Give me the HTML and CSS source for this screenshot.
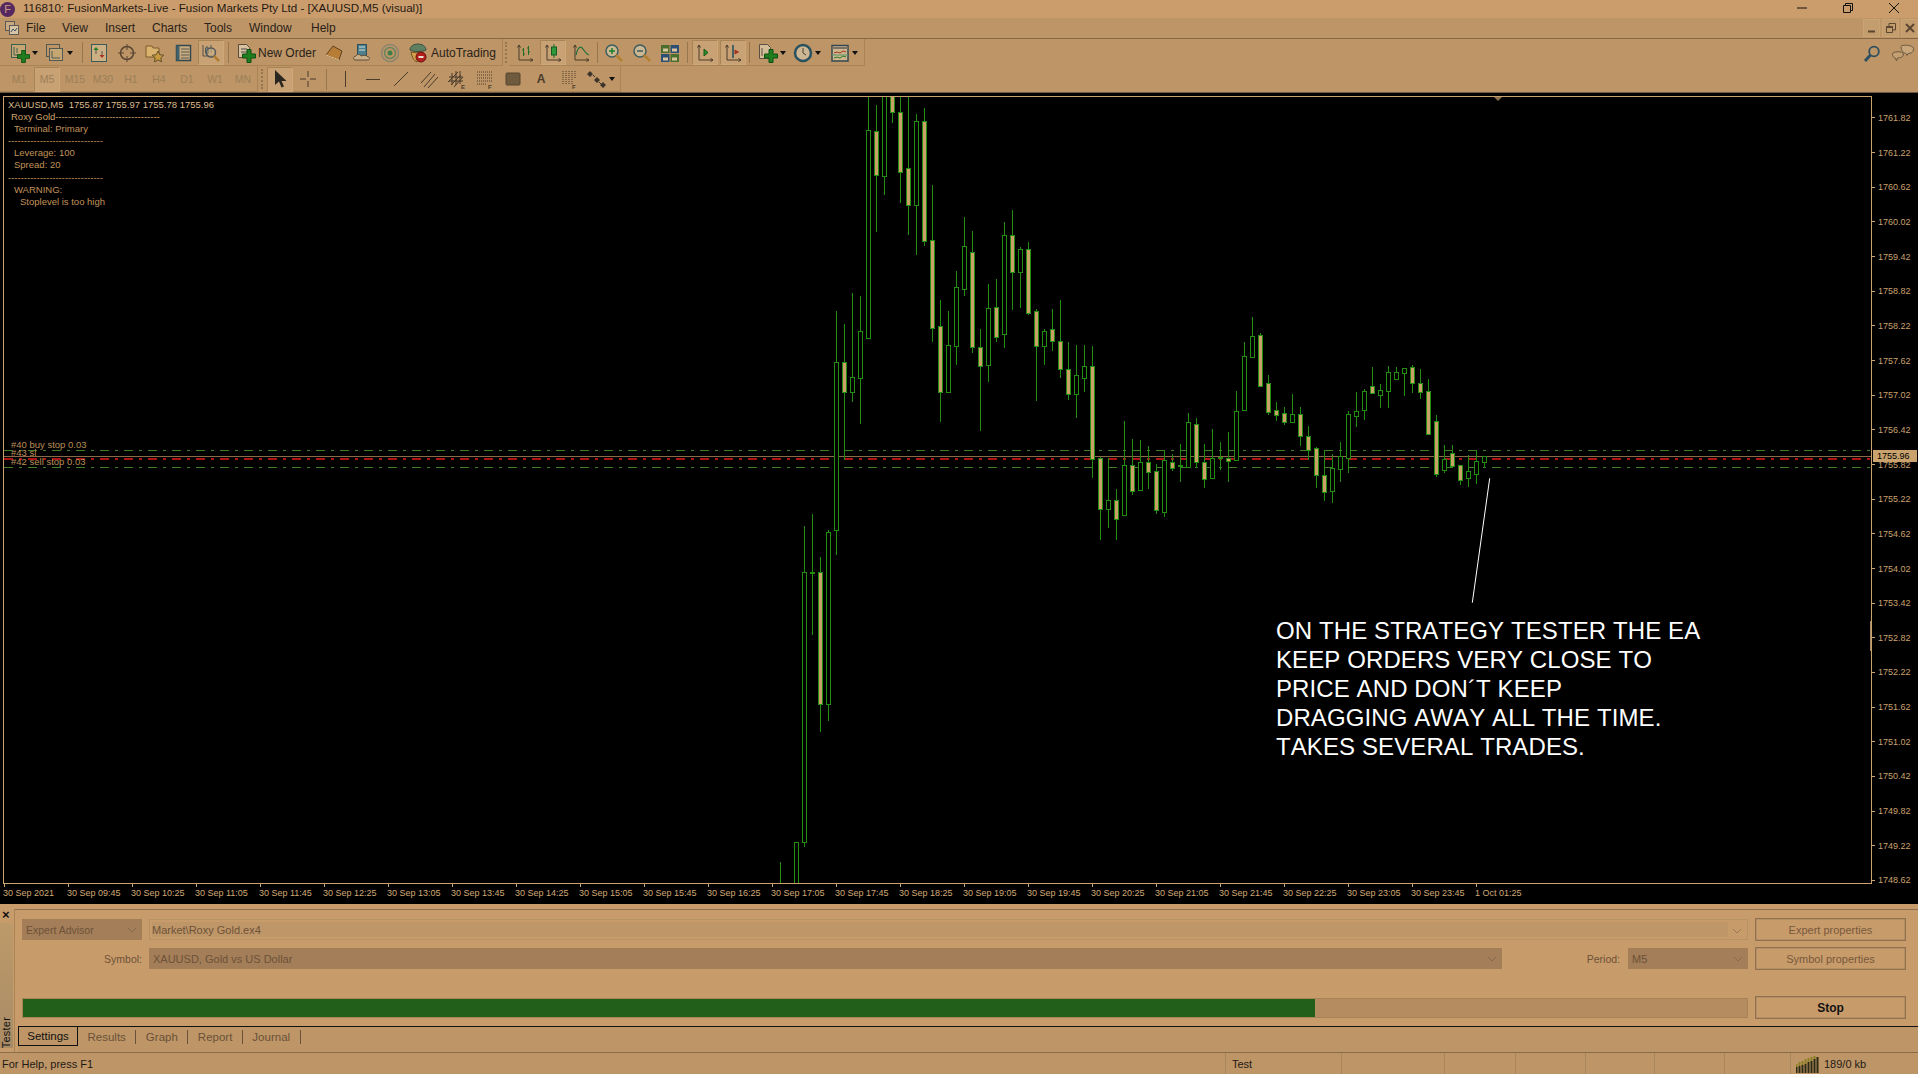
FILE: index.html
```html
<!DOCTYPE html>
<html lang="en">
<head>
<meta charset="utf-8">
<title>116810: FusionMarkets-Live</title>
<link rel="stylesheet" href="styles.css">
</head>
<body>
<svg class="defs" aria-hidden="true">
  <symbol id="plus" viewBox="0 0 14 14"><path d="M5 .5h4v4.500h4.500v4H9v4.500H5V9H.5V5H5z" fill="#1f7f1f" stroke="#0e4f14"/></symbol>
  <symbol id="axes" viewBox="0 0 20 20"><path d="M4 2v15h14M4 2L2.500 4.500M4 2l1.500 2.500M18 17l-2.500-1.500M18 17l-2.500 1.500" fill="none" stroke="#4a3b2a"/></symbol>
</svg>

<div class="app">
  <header class="titlebar">
    <span class="logo">F</span>
    <span class="title-text">116810: FusionMarkets-Live - Fusion Markets Pty Ltd - [XAUUSD,M5 (visual)]</span>
    <div class="winbtns">
      <svg class="winbtn" viewBox="0 0 12 12"><path d="M1 6h10" stroke="#111" fill="none"/></svg>
      <svg class="winbtn" viewBox="0 0 12 12"><path d="M1.500 3.500h7v7h-7zM3.500 3.500v-2h7v7h-2" stroke="#111" fill="none"/></svg>
      <svg class="winbtn" viewBox="0 0 12 12"><path d="M1 1l10 10M11 1L1 11" stroke="#111" fill="none"/></svg>
    </div>
  </header>

  <nav class="menubar">
    <svg class="menu-icon" viewBox="0 0 16 16"><rect x="1.500" y="1.500" width="9" height="9" fill="#c9a97f" stroke="#5b5a58"/><rect x="5.500" y="5.500" width="9" height="9" fill="#d8c3a3" stroke="#5b5a58"/><path d="M7 12l2-3 2 2 2-3" stroke="#35566b" fill="none"/></svg>
    <span class="menu-item m-file">File</span>
    <span class="menu-item m-view">View</span>
    <span class="menu-item m-insert">Insert</span>
    <span class="menu-item m-charts">Charts</span>
    <span class="menu-item m-tools">Tools</span>
    <span class="menu-item m-window">Window</span>
    <span class="menu-item">Help</span>
    <div class="mdi">
      <span class="mdi-btn"><svg viewBox="0 0 12 12"><path d="M2 9.500h7" stroke="#5c4630" stroke-width="2"/></svg></span>
      <span class="mdi-btn"><svg viewBox="0 0 12 12"><path d="M1.500 4.500h6v6h-6zM4 4V1.500h6.500V8H8" stroke="#5c4630" fill="none"/><path d="M1.500 5h6" stroke="#5c4630" stroke-width="2"/></svg></span>
      <span class="mdi-btn"><svg viewBox="0 0 12 12"><path d="M2 2l8 8M10 2l-8 8" stroke="#5c4630" stroke-width="2"/></svg></span>
    </div>
  </nav>

  <div class="toolbar tb-one">
    <div class="tgroup g-main">
      <span class="btn split"><svg class="ic" viewBox="0 0 20 20"><rect x="1.500" y="1.500" width="14" height="13" fill="#c6a774" stroke="#3f5e52"/><path d="M4 4v8h8M7 5v5" stroke="#3f5e52" fill="none"/><use href="#plus" x="7" y="7" width="13" height="13"/></svg><i class="dd"></i></span>
      <span class="btn split"><svg class="ic" viewBox="0 0 20 20"><rect x="1.500" y="1.500" width="13" height="12" fill="none" stroke="#4f5a54"/><rect x="4.500" y="5.500" width="13" height="12" fill="#c6a774" stroke="#4f5a54"/><path d="M7 8v7h8" stroke="#4f5a54" fill="none"/></svg><i class="dd"></i></span>
      <i class="sep s-a"></i>
      <span class="btn"><svg class="ic" viewBox="0 0 20 20"><rect x="2.500" y="1.500" width="15" height="17" fill="#ccb083" stroke="#3d5a5a"/><path d="M7 4l-2.500 3h5z" fill="#1f7f1f"/><path d="M13 15l-2.500-3h5z" fill="#a63224"/><path d="M7 7v4M13 8v4" stroke="#555"/></svg></span>
      <span class="btn"><svg class="ic" viewBox="0 0 20 20"><circle cx="10" cy="10" r="6.500" fill="none" stroke="#5a4632" stroke-width="1.500"/><path d="M10 1v6M10 13v6M1 10h6M13 10h6" stroke="#5a4632"/></svg></span>
      <span class="btn"><svg class="ic" viewBox="0 0 20 20"><path d="M1 3h6l1 2h6v9H1z" fill="#d9b26d" stroke="#7b5a2e"/><path d="M13 8l1.800 3.700 4 .5-3 2.700.8 4-3.600-2-3.600 2 .8-4-3-2.700 4-.5z" fill="#c79a3e" stroke="#62502a"/></svg></span>
      <span class="btn"><svg class="ic" viewBox="0 0 20 20"><rect x="3.500" y="2.500" width="14" height="15" fill="#c8ab7f" stroke="#31484f" stroke-width="1.500"/><path d="M3.500 2.500h3v15h-3z" fill="#41606a"/><path d="M8 6h8M8 9h8M8 12h8M8 15h8" stroke="#5a5a50"/></svg></span>
      <span class="btn boxed"><svg class="ic" viewBox="0 0 20 20"><path d="M2 2v11h9" stroke="#59524a" fill="none"/><path d="M6 3v9M10 2v8" stroke="#4c5c55"/><rect x="4.500" y="5" width="3" height="5" fill="#a8a08c" stroke="#4c5c55"/><circle cx="10" cy="9.500" r="4.500" fill="#cbb38b" fill-opacity=".6" stroke="#52585a" stroke-width="1.500"/><path d="M13 13l5 5" stroke="#b07d30" stroke-width="2.500"/></svg></span>
      <i class="sep"></i>
      <span class="btn wide-order"><svg class="ic" viewBox="0 0 20 20"><path d="M2.500 1.500h8l3 3v10h-11z" fill="#d8c29f" stroke="#5a4a3a"/><path d="M5 6h6M5 9h6" stroke="#4c4c4c"/><use href="#plus" x="6" y="6" width="14" height="14"/></svg><span class="btn-label">New Order</span></span>
      <span class="btn"><svg class="ic" viewBox="0 0 20 20"><path d="M2 12l7-9 9 5-3 9z" fill="#b77d36" stroke="#5f4120"/><path d="M2 12l13 5" stroke="#e3c58f"/></svg></span>
      <span class="btn"><svg class="ic" viewBox="0 0 20 20"><rect x="5.500" y="1.500" width="9" height="11" fill="#4e7f8a" stroke="#2e4f59"/><path d="M7 4h6M7 7h6" stroke="#cfe0dc"/><path d="M3 17c-2 0-2-4 1-4 1-2 4-2 5 0 2-1 6-1 7 1 2 0 2 3 0 3z" fill="#c9ae86" stroke="#62503a"/></svg></span>
      <span class="btn"><svg class="ic" viewBox="0 0 20 20"><circle cx="10" cy="10" r="8.500" fill="none" stroke="#8c8570" stroke-width="1.500"/><circle cx="10" cy="10" r="5.500" fill="none" stroke="#6a8460" stroke-width="1.500"/><circle cx="10" cy="10" r="2.500" fill="#3d7f4a"/></svg></span>
      <span class="btn wide-auto"><svg class="ic" viewBox="0 0 20 20"><path d="M2 7c0-4 4-6 8-6s8 2 8 6c-3 2-13 2-16 0z" fill="#5e7f60" stroke="#3e4f3e"/><path d="M3 9c1 5 3 9 6 10l2-9z" fill="#d4a24c" stroke="#70501f"/><circle cx="13" cy="14" r="5" fill="#b21e1a" stroke="#6b1210"/><rect x="10.500" y="13" width="5" height="2" fill="#e7e0d0"/></svg><span class="btn-label">AutoTrading</span></span>
    </div>
    <i class="grip"></i>
    <div class="tgroup g-chart">
      <span class="btn"><svg class="ic" viewBox="0 0 20 20"><use href="#axes" width="20" height="20"/><path d="M8.500 5v8M7 7h1.500M8.500 11H10M13.500 3v9M12 5h1.500M13.500 9H15" stroke="#1f6f2a" fill="none"/></svg></span>
      <span class="btn boxed"><svg class="ic" viewBox="0 0 20 20"><use href="#axes" width="20" height="20"/><path d="M11 1v14" stroke="#1f6f2a"/><rect x="8.500" y="4" width="5" height="8" fill="#2f9a3c" stroke="#155a22"/></svg></span>
      <span class="btn"><svg class="ic" viewBox="0 0 20 20"><use href="#axes" width="20" height="20"/><path d="M5 12c2-9 5-9 7-6s3 5 6 6" fill="none" stroke="#1f6f3a" stroke-width="1.200"/></svg></span>
      <i class="sep s-n"></i>
      <span class="btn"><svg class="ic" viewBox="0 0 20 20"><circle cx="8" cy="8" r="6" fill="#d2c6a4" fill-opacity=".7" stroke="#3e5d5f" stroke-width="1.500"/><path d="M5 8h6M8 5v6" stroke="#1c7f2c" stroke-width="1.500"/><path d="M12 12l6 6" stroke="#b3802f" stroke-width="2.500"/></svg></span>
      <span class="btn"><svg class="ic" viewBox="0 0 20 20"><circle cx="8" cy="8" r="6" fill="#d2c6a4" fill-opacity=".7" stroke="#3e5d5f" stroke-width="1.500"/><path d="M5 8h6" stroke="#3e5d5f" stroke-width="1.500"/><path d="M12 12l6 6" stroke="#b3802f" stroke-width="2.500"/></svg></span>
      <span class="btn"><svg class="ic" viewBox="0 0 20 20"><path d="M1 2h8.500v8H1z" fill="#4a6f2c"/><path d="M10.500 2H19v8h-8.500z" fill="#2a4f73"/><path d="M1 11h8.500v8H1z" fill="#2a4f73"/><path d="M10.500 11H19v8h-8.500z" fill="#4a6f2c"/><path d="M3 5.500h5v3H3zM12 5.500h5v3h-5zM3 14.500h5v3H3zM12 14.500h5v3h-5z" fill="#d9c39c"/></svg></span>
      <i class="sep"></i>
      <span class="btn boxed"><svg class="ic" viewBox="0 0 20 20"><use href="#axes" width="20" height="20"/><path d="M9 6v7l4-3.500z" fill="#2a8a2a" stroke="#165a1a"/></svg></span>
      <span class="btn boxed"><svg class="ic" viewBox="0 0 20 20"><use href="#axes" width="20" height="20"/><path d="M10 2v13" stroke="#1e4f60" stroke-width="1.500"/><path d="M16 9h-3M15 9l-3-2v4z" fill="#a63220" stroke="#a63220"/></svg></span>
      <i class="sep s-n"></i>
      <span class="btn split s-first"><svg class="ic" viewBox="0 0 20 20"><path d="M1.500 1.500h8l3 3v11h-11z" fill="#d3bd98" stroke="#5c5045"/><path d="M4 5v8" stroke="#5c5045"/><use href="#plus" x="6" y="6" width="14" height="14"/></svg><i class="dd"></i></span>
      <span class="btn split"><svg class="ic" viewBox="0 0 20 20"><circle cx="10" cy="10" r="8" fill="#cdb694" stroke="#28525f" stroke-width="2.500"/><path d="M10 5v5l3 2" stroke="#46443c" fill="none"/></svg><i class="dd"></i></span>
      <span class="btn split s-first"><svg class="ic" viewBox="0 0 20 20"><rect x="2" y="2.500" width="16" height="15.500" fill="#cfb58e" stroke="#35484f" stroke-width="1.500"/><path d="M2 5h16" stroke="#7c7366" stroke-width="2"/><path d="M4 10l3-1 3 1 3-2 3 1" fill="none" stroke="#a13422"/><path d="M2 12h16" stroke="#596"/><path d="M4 15l3-1 3 1 3-2 3 1" fill="none" stroke="#2a7a2a"/></svg><i class="dd"></i></span>
    </div>
    <div class="tb-right">
      <svg class="ic" viewBox="0 0 20 20"><circle cx="12" cy="7.500" r="4.800" fill="none" stroke="#2f4f60" stroke-width="1.800"/><path d="M8.500 11L3 17" stroke="#2f4f60" stroke-width="3"/></svg>
      <svg class="ic chat" viewBox="0 0 24 20"><path d="M10 2.500c0-2 12-2 12.500 2 .5 4-3 5-5.500 5l-1 2-1-2c-2 0-5-3-5-7z" fill="#c9a67a" stroke="#6d5a44"/><path d="M1.500 10c0-3 11-3 11 0 0 3-3 4-6 4l-1 3-1-3c-2 0-3-2-3-4z" fill="#c49f72" stroke="#6d5a44"/></svg>
    </div>
  </div>

  <div class="toolbar tb-two">
    <div class="tgroup g-tf">
      <span class="tf">M1</span><span class="tf boxed">M5</span><span class="tf">M15</span><span class="tf">M30</span><span class="tf">H1</span><span class="tf">H4</span><span class="tf">D1</span><span class="tf">W1</span><span class="tf">MN</span>
    </div>
    <i class="grip"></i>
    <div class="tgroup g-draw">
      <span class="btn boxed"><svg class="ic" viewBox="0 0 20 20"><path d="M5 1v15l4-3.500 2.500 6 2.500-1-2.500-5.500h5z" fill="#2c2620"/></svg></span>
      <span class="btn"><svg class="ic" viewBox="0 0 20 20"><path d="M10 2v6M10 12v6M2 10h6M12 10h6" stroke="#4a3b2a"/></svg></span>
      <i class="sep s-d"></i>
      <span class="btn"><svg class="ic" viewBox="0 0 20 20"><path d="M10.500 2v16" stroke="#4a3b2a"/></svg></span>
      <span class="btn"><svg class="ic" viewBox="0 0 20 20"><path d="M3 10.500h14" stroke="#4a3b2a"/></svg></span>
      <span class="btn"><svg class="ic" viewBox="0 0 20 20"><path d="M3 17L17 3" stroke="#4a3b2a"/></svg></span>
      <span class="btn"><svg class="ic" viewBox="0 0 20 20"><path d="M2 14L12 3M5 18L16 5M9 19L19 8" stroke="#4a3b2a"/></svg></span>
      <span class="btn"><svg class="ic" viewBox="0 0 20 20"><path d="M1 13L11 3M4 16L14 6M7 18L16 8M5 4v12M9 2v14M13 2v13M2 8h14M2 12h14" stroke="#4a3b2a" fill="none"/><text class="ic-letter" x="14" y="20">E</text></svg></span>
      <span class="btn"><svg class="ic" viewBox="0 0 20 20"><path d="M2 3h15M2 6h15M2 9h15M2 12h15M2 15h10" stroke="#4a3b2a" stroke-dasharray="1 1" fill="none"/><text class="ic-letter" x="13" y="20">F</text></svg></span>
      <span class="btn"><svg class="ic" viewBox="0 0 20 20"><rect x="3" y="4" width="14" height="12" rx="1" fill="#6f5a3e" stroke="#57462f"/></svg></span>
      <span class="btn tool-a">A</span>
      <span class="btn"><svg class="ic" viewBox="0 0 20 20"><path d="M4 2v14M7 2v14M10 2v14M13 2v14M16 2v8" stroke="#4a3b2a" stroke-dasharray="1 1" fill="none"/><text class="ic-letter" x="13" y="20">F</text></svg></span>
      <span class="btn split s-arrows"><svg class="ic" viewBox="0 0 20 20"><path d="M3 2l3 3-3 3-3-3zM10 8l3 3-3 3-3-3zM16 13l3 3-3 3-3-3z" fill="#3c342a"/><path d="M6 6l2 2M12 13l2 2" stroke="#3c342a"/></svg><i class="dd"></i></span>
    </div>
  </div>

  <main class="chart-panel">
    <div class="chart-row">
      <div class="plot">
        <svg id="candles" class="candles" viewBox="4 97 1867 786">
          <path class="ln-green" d="M4 450.500H1871M4 467.500H1871"/>
          <path class="ln-price" d="M4 456.500H1871"/>
          <path class="ln-red" d="M4 459H1871"/>
          <path class="ln-note" d="M1489.700 478.300L1472.300 602.700"/>
        </svg>
        <div class="info">
          <div class="info-head">XAUUSD,M5  1755.87 1755.97 1755.78 1755.96</div>
          <div class="ind-1">Roxy Gold---------------------------------</div>
          <div class="ind-2">Terminal: Primary</div>
          <div>------------------------------</div>
          <div class="ind-2">Leverage: 100</div>
          <div class="ind-2">Spread: 20</div>
          <div>------------------------------</div>
          <div class="ind-2">WARNING:</div>
          <div class="ind-3">Stoplevel is too high</div>
        </div>
        <div class="order o-40">#40 buy stop 0.03</div>
        <div class="order o-43">#43 sl</div>
        <div class="order o-42">#42 sell stop 0.03</div>
        <i class="shift-mark"></i>
        <i class="scroll-mark"></i>
        <div class="note">ON THE STRATEGY TESTER THE EA<br>KEEP ORDERS VERY CLOSE TO<br>PRICE AND DON´T KEEP<br>DRAGGING AWAY ALL THE TIME.<br>TAKES SEVERAL TRADES.</div>
      </div>
      <div class="price-axis">
        <span class="p">1761.82</span><span class="p">1761.22</span><span class="p">1760.62</span><span class="p">1760.02</span><span class="p">1759.42</span><span class="p">1758.82</span><span class="p">1758.22</span><span class="p">1757.62</span><span class="p">1757.02</span><span class="p">1756.42</span><span class="p">1755.82</span><span class="p">1755.22</span><span class="p">1754.62</span><span class="p">1754.02</span><span class="p">1753.42</span><span class="p">1752.82</span><span class="p">1752.22</span><span class="p">1751.62</span><span class="p">1751.02</span><span class="p">1750.42</span><span class="p">1749.82</span><span class="p">1749.22</span><span class="p">1748.62</span>
        <span class="price-tag">1755.96</span>
      </div>
    </div>
    <div class="time-axis">
      <span class="t">30 Sep 2021</span><span class="t">30 Sep 09:45</span><span class="t">30 Sep 10:25</span><span class="t">30 Sep 11:05</span><span class="t">30 Sep 11:45</span><span class="t">30 Sep 12:25</span><span class="t">30 Sep 13:05</span><span class="t">30 Sep 13:45</span><span class="t">30 Sep 14:25</span><span class="t">30 Sep 15:05</span><span class="t">30 Sep 15:45</span><span class="t">30 Sep 16:25</span><span class="t">30 Sep 17:05</span><span class="t">30 Sep 17:45</span><span class="t">30 Sep 18:25</span><span class="t">30 Sep 19:05</span><span class="t">30 Sep 19:45</span><span class="t">30 Sep 20:25</span><span class="t">30 Sep 21:05</span><span class="t">30 Sep 21:45</span><span class="t">30 Sep 22:25</span><span class="t">30 Sep 23:05</span><span class="t">30 Sep 23:45</span><span class="t">1 Oct 01:25</span>
    </div>
  </main>

  <section class="tester">
    <aside class="side">
      <span class="side-x">×</span>
      <span class="side-bar"><span class="side-label">Tester</span></span>
    </aside>
    <div class="tester-main">
      <div class="form-row r1">
        <span class="select dark w-ea">Expert Advisor<svg class="chev" viewBox="0 0 10 6"><path d="M1 1l4 4 4-4" fill="none" stroke="#86684a"/></svg></span>
        <span class="select light grow"><span class="light-inner">Market\Roxy Gold.ex4</span><svg class="chev" viewBox="0 0 10 6"><path d="M1 1l4 4 4-4" fill="none" stroke="#9a7a56"/></svg></span>
        <span class="tbtn">Expert properties</span>
      </div>
      <div class="form-row r2">
        <span class="lbl w-ea">Symbol:</span>
        <span class="select dark grow">XAUUSD, Gold vs US Dollar<svg class="chev" viewBox="0 0 10 6"><path d="M1 1l4 4 4-4" fill="none" stroke="#86684a"/></svg></span>
        <span class="lbl w-period">Period:</span>
        <span class="select dark w-ea">M5<svg class="chev" viewBox="0 0 10 6"><path d="M1 1l4 4 4-4" fill="none" stroke="#86684a"/></svg></span>
        <span class="tbtn">Symbol properties</span>
      </div>
      <div class="form-row r3">
        <div class="progress"><div class="progress-fill"></div></div>
        <span class="tbtn stop">Stop</span>
      </div>
      <div class="tabs">
        <span class="tab active">Settings</span>
        <span class="tab">Results</span>
        <span class="tab">Graph</span>
        <span class="tab">Report</span>
        <span class="tab">Journal</span>
      </div>
    </div>
  </section>

  <footer class="status">
    <span class="st st-help">For Help, press F1</span>
    <span class="st st-test">Test</span>
    <span class="st st-b"></span>
    <span class="st st-c"></span>
    <span class="st st-c"></span>
    <span class="st st-d"></span>
    <span class="st st-c"></span>
    <span class="st st-e"></span>
    <span class="st st-conn"><svg class="bars" viewBox="0 0 24 18"><path d="M.5 18v-6M3.500 18v-7M6.500 18v-8M9.500 18v-9M12.500 18V7M15.500 18V6M18.500 18V4M21.500 18V2" stroke="#2c2a14" stroke-width="2"/><path d="M.5 9v3M3.500 7v4M6.500 6v4M9.500 4v5M12.500 3v4M15.500 2v4M18.500 1v3" stroke="#8a7f24" stroke-width="2"/></svg>189/0 kb</span>
  </footer>
  <div class="bottom-edge"><i class="be-a"></i><i class="be-b"></i><i class="be-c"></i></div>
</div>
<script src="chart.js"></script>
</body>
</html>
```

FILE: styles.css
```css
* { box-sizing: border-box; }
html, body { margin: 0; padding: 0; background: #fff; overflow: hidden; }
body { font-family: "Liberation Sans", Arial, sans-serif; color: #2a2118; }
i { display: block; font-style: normal; }
.defs { width: 0; height: 0; position: absolute; }

.app { width: 1918px; height: 1074px; display: flex; flex-direction: column; background: #c89b6b; }

/* title */
.titlebar { height: 18px; background: #cc9d6c; display: flex; align-items: center; padding-bottom: 3px; font-size: 11.600px; flex: none; }
.logo { width: 15px; height: 15px; margin-top: 3px; border-radius: 50%; background: #55285f; color: #c89b80; font-size: 11px; line-height: 15px; text-align: center; flex: none; }
.title-text { margin-left: 8px; color: #1f1a14; white-space: nowrap; }
.winbtns { margin-left: auto; display: flex; gap: 34px; padding-right: 18px; }
.winbtn { width: 12px; height: 12px; }

/* menu */
.menubar { height: 21px; background: #bd9567; border-bottom: 1px solid #856845; display: flex; align-items: center; font-size: 12px; flex: none; position: relative; }
.menu-icon { width: 16px; height: 16px; margin: 0 6px 0 4px; flex: none; }
.menu-item { color: #2a2118; }
.m-file { width: 36px; }
.m-view { width: 43px; }
.m-insert { width: 47px; }
.m-charts { width: 52px; }
.m-tools { width: 45px; }
.m-window { width: 62px; }
.mdi { margin-left: auto; display: flex; gap: 2px; height: 18px; }
.mdi-btn { width: 17px; height: 18px; border: 1px solid #c9a372; display: flex; align-items: center; justify-content: center; background: #c49d6f; }
.mdi-btn svg { width: 12px; height: 12px; }

/* toolbars */
.toolbar { display: flex; background: #bd9567; flex: none; }
.tb-one { height: 27px; }
.tb-two { height: 27px; border-bottom: 1px solid #6e5a44; }
.tgroup { display: flex; align-items: center; height: 100%; padding-top: 1px; border-right: 1px solid #a98556; border-bottom: 1px solid #a98556; }
.g-main { width: 503px; padding-left: 6px; }
.g-chart { width: 356px; padding-left: 2px; }
.g-tf { width: 258px; padding-left: 5px; }
.g-draw { width: 355px; padding-left: 0; }
.grip { width: 3px; margin: 3px 2px 3px 3px; border-left: 2px dotted #96764e; }
.tb-one .grip { margin-right: 1px; margin-left: 2px; }
.btn { width: 28px; height: 25px; display: flex; align-items: center; justify-content: center; flex: none; }
.ic { width: 20px; height: 20px; flex: none; }
.boxed { border: 1px solid #a98556; border-right-color: #cfa878; border-bottom-color: #cfa878; background: #c8a174; width: 26px; margin: 0 1px; }
.split { width: 35px; justify-content: flex-start; padding-left: 4px; }
.s-first { margin-left: 2px; }
.s-arrows { width: 37px; padding-left: 4px; }
.dd { width: 0; height: 0; border: 3px solid transparent; border-top: 4px solid #111; border-bottom: 0; margin-left: 2px; }
.sep { width: 1px; height: 21px; background: #96764e; margin: 0 3px; flex: none; }
.s-a { margin: 0 2px 0 6px; }
.s-n { margin: 0 2px; }
.s-d { margin: 0 4px; }
.wide-order { width: 88px; justify-content: flex-start; padding-left: 4px; }
.wide-auto { width: 97px; justify-content: flex-start; padding-left: 4px; }
.btn-label { font-size: 12px; margin-left: 2px; color: #2a2118; }
.wide-auto .btn-label { margin-left: 3px; }
.tb-right { margin-left: auto; display: flex; gap: 9px; padding-right: 3px; padding-top: 3px; align-items: center; height: 26px; }
.chat { width: 24px; }
.tf { width: 28px; height: 25px; font-size: 10.500px; color: #9c7f58; display: flex; align-items: center; justify-content: center; flex: none; }
.tf.boxed { width: 26px; }
.tool-a { font-size: 12px; font-weight: bold; color: #4a3b2a; }
.ic-letter { font: bold 6px "Liberation Sans", sans-serif; fill: #4a3b2a; }

/* chart */
.chart-panel { height: 811px; flex: none; background: #000; padding-top: 3px; display: flex; flex-direction: column; }
.chart-row { display: flex; height: 788px; flex: none; padding-left: 3px; }
.plot { width: 1869px; height: 788px; border: 1px solid #c9a26e; position: relative; overflow: hidden; flex: none; }
.candles { position: absolute; left: 0; top: 0; width: 1867px; height: 786px; display: block; }
.ln-green, .ln-red { fill: none; stroke-dasharray: 9 6 3 6; }
.ln-green { stroke: #3f7f25; stroke-width: 1; }
.ln-red { stroke: #ae1212; stroke-width: 2; }
.ln-price { fill: none; stroke: #8a6a4a; stroke-width: 1; }
.ln-note { fill: none; stroke: #fff; stroke-width: 1; }
.wick { stroke: #238d12; stroke-width: 1; shape-rendering: crispEdges; }
.body-h { fill: #000; stroke: #238d12; stroke-width: 1; shape-rendering: crispEdges; }
.body-f { fill: #c9a066; stroke: #238d12; stroke-width: 1; shape-rendering: crispEdges; }

.info { position: absolute; left: 4px; top: 2px; font-size: 9.500px; line-height: 12.100px; color: #c2935a; white-space: nowrap; }
.info-head { color: #dcbb8c; white-space: pre; }
.ind-1 { padding-left: 3px; color: #cfa36c; }
.ind-2 { padding-left: 6px; }
.ind-3 { padding-left: 12px; }
.order { position: absolute; left: 7px; font-size: 9.500px; line-height: 10px; color: #bb8f5b; white-space: nowrap; }
.o-40 { top: 343px; }
.o-43 { top: 351px; }
.o-42 { top: 360px; }
.shift-mark { position: absolute; left: 1490px; top: 0; width: 0; height: 0; border: 4px solid transparent; border-top: 4px solid #8a7050; border-bottom: 0; }
.scroll-mark { position: absolute; right: -1px; top: 524px; width: 2px; height: 30px; background: #a58a64; }
.note { position: absolute; left: 1272px; top: 519px; font-size: 24px; line-height: 29.100px; font-kerning: none; letter-spacing: .1px; color: #fff; white-space: nowrap; }

.price-axis { flex: 1; padding-top: 4.670px; position: relative; color: #c9a26e; font-size: 9px; }
.p { display: flex; align-items: center; height: 34.670px; white-space: nowrap; }
.p::before { content: ""; width: 3px; height: 1px; background: #c9a26e; margin-right: 3px; }
.price-tag { position: absolute; left: 1px; top: 354px; width: 44px; height: 12px; line-height: 12px; background: #c9a26e; color: #000; padding-left: 4px; }

.time-axis { display: flex; height: 20px; flex: none; padding-left: 3px; color: #d0a974; font-size: 9px; }
.t { width: 64px; flex: none; height: 100%; padding-top: 4px; line-height: 10px; position: relative; white-space: nowrap; }
.t::before { content: ""; position: absolute; left: 1px; top: 0; width: 1px; height: 3px; background: #c9a26e; }

/* tester */
.tester { height: 148px; flex: none; display: flex; padding-top: 5px; background: #c89b6b; }
.side { width: 14px; flex: none; display: flex; flex-direction: column; }
.side-x { height: 14px; flex: none; font-size: 13px; font-weight: bold; line-height: 12px; padding-left: 2px; color: #111; }
.side-bar { flex: 1; background: linear-gradient(#bd9a69, #a98b66); display: flex; align-items: flex-end; width: 13px; margin-bottom: 4px; }
.side-label { writing-mode: vertical-rl; transform: rotate(180deg); font-size: 11px; line-height: 13px; color: #111; letter-spacing: .2px; }
.tester-main { flex: 1; border-top: 1px solid #8e7050; border-left: 1px solid #a98556; display: flex; flex-direction: column; padding-top: 8px; min-width: 0; }
.form-row { display: flex; align-items: center; padding: 0 12px 0 7px; flex: none; height: 23px; }
.r2 { margin-top: 6px; }
.r3 { margin-top: 26px; }
.select { height: 21px; display: flex; align-items: center; font-size: 11px; padding: 0 4px; white-space: nowrap; position: relative; flex: none; }
.select.dark { background: #a37e59; color: #6d5238; }
.select.light { background: #c89b6b; border: 1px solid #b79263; padding: 2px; color: #6d5238; }
.light-inner { background: #be9668; flex: 1; height: 100%; display: flex; align-items: center; padding-left: 0; margin-right: 17px; }
.w-ea { width: 120px; }
.grow { flex: 1; min-width: 0; }
.r1 .grow, .r2 .grow { margin: 0 7px; }
.r1 .select.dark { font-size: 10.500px; }
.chev { position: absolute; right: 5px; top: 8px; width: 10px; height: 6px; }
.lbl { font-size: 10.500px; color: #6d5238; text-align: right; flex: none; }
.r2 .grow { margin-right: 0; }
.w-period { width: 126px; padding-right: 8px; }
.r2 .select.w-ea { margin-right: 7px; }
.tbtn { width: 151px; height: 23px; border: 1px solid #8f7152; box-shadow: inset 0 0 0 .5px #a48259; display: flex; align-items: center; justify-content: center; font-size: 11px; color: #77593c; flex: none; }
.stop { font-weight: bold; font-size: 12px; color: #111; }
.progress { flex: 1; height: 20px; background: #b58c60; border: 1px solid #a68256; margin-right: 7px; }
.progress-fill { width: 1292px; height: 100%; background: #225f1a; }
.tabs { flex: 1; margin-top: 7px; margin-left: 3px; background: #bd9567; border-top: 1px solid #111; display: flex; align-items: flex-start; height: 22px; }
.tab { font-size: 11.500px; color: #6a5138; height: 14px; margin-top: 3px; line-height: 14px; padding: 0 9.500px; border-right: 1px solid #6a5138; white-space: nowrap; }
.tab.active { color: #111; height: 19px; line-height: 18px; margin-top: 0; border: 1px solid #111; border-top: 0; padding: 0; width: 60px; text-align: center; }

/* status */
.status { height: 22px; flex: none; background: #bd9567; border-top: 1px solid #8a6c49; display: flex; align-items: stretch; font-size: 11px; color: #1f1a14; }
.st { display: flex; align-items: center; border-right: 1px solid #a8855a; flex: none; padding-left: 6px; white-space: nowrap; }
.st-help { width: 1226px; padding-left: 2px; }
.st-test { width: 116px; }
.st-b { width: 103px; }
.st-c { width: 70.500px; }
.st-d { width: 68.500px; }
.st-e { width: 66px; }
.st-conn { flex: 1; border-right: 0; padding-left: 5px; }
.bars { width: 24px; height: 18px; margin-right: 4px; }
.bottom-edge { height: 1px; flex: none; display: flex; }
.be-a { width: 47px; background: #111; }
.be-b { width: 344px; background: #a88558; }
.be-c { flex: 1; background: #111; }
```

FILE: chart.js
```js
// [centre x, wick top, wick bottom, body top, body bottom, filled]
var CANDLES = [
[780,862,883,883,883,0],[796,842,883,842,890,0],[804,526,847,572,842,0],[812,514,635,572,573,0],
[820,557,732,572,704,1],[828,530,721,532,704,0],[836,311,555,362,530,0],[844,324,460,362,392,1],
[852,293,402,377,392,0],[860,296,424,331,378,0],[868,90,338,130,338,0],[876,105,232,131,175,1],
[884,90,195,90,176,0],[892,90,123,90,112,1],[900,90,203,112,172,1],[908,90,235,168,205,1],
[916,114,255,121,205,0],[924,108,246,121,241,1],[932,185,342,240,328,1],[940,300,422,326,392,1],
[948,311,392,345,392,0],[956,271,365,287,346,0],[964,217,296,246,289,0],[972,231,353,252,347,1],
[980,329,431,347,366,1],[988,284,382,308,365,0],[996,279,342,307,337,1],[1004,222,348,235,334,0],
[1012,210,310,235,272,1],[1020,247,308,249,272,0],[1028,242,315,249,313,1],[1036,309,401,311,346,1],
[1044,329,365,331,346,0],[1052,309,351,329,341,1],[1060,300,378,341,369,1],[1068,342,400,369,394,1],
[1076,345,418,375,394,0],[1084,345,392,366,378,0],[1092,346,478,366,459,1],[1100,457,540,458,509,1],
[1108,458,528,500,509,0],[1116,489,540,500,519,1],[1124,421,515,465,515,0],[1132,439,495,465,491,1],
[1140,440,490,462,490,0],[1148,446,489,462,472,1],[1156,464,514,471,510,1],[1164,450,517,460,512,0],
[1172,454,471,462,468,1],[1180,444,482,465,466,0],[1188,413,467,422,467,0],[1196,418,468,424,462,1],
[1204,444,488,462,479,1],[1212,429,479,458,478,0],[1220,442,470,457,458,0],[1228,432,482,458,461,1],
[1236,391,460,411,460,0],[1244,342,410,356,410,0],[1252,317,358,336,357,0],[1260,333,386,335,386,1],
[1268,375,415,383,412,1],[1276,402,421,410,415,1],[1284,407,425,413,422,1],[1292,394,423,414,422,0],
[1300,407,446,414,436,1],[1308,426,460,436,450,1],[1316,447,488,448,475,1],[1324,450,501,475,492,1],
[1332,454,503,468,491,0],[1340,442,482,456,469,0],[1348,411,473,414,458,0],[1356,392,427,411,416,0],
[1364,389,420,391,410,0],[1372,367,393,386,393,1],[1380,384,408,390,395,0],[1388,366,408,372,391,0],
[1396,367,380,372,379,0],[1404,368,396,368,373,0],[1412,365,393,367,383,1],[1420,369,399,383,392,1],
[1428,379,434,391,434,1],[1436,415,477,421,474,1],[1444,445,473,459,470,0],[1452,445,466,453,466,1],
[1460,465,485,465,480,1],[1468,455,487,471,478,0],[1476,450,484,461,474,0],[1484,456,468,456,462,0]
];

(function () {
  var NS = "http://www.w3.org/2000/svg";
  var svg = document.getElementById("candles");
  function add(tag, cls, attrs) {
    var el = document.createElementNS(NS, tag);
    el.setAttribute("class", cls);
    for (var k in attrs) el.setAttribute(k, attrs[k]);
    svg.appendChild(el);
  }
  CANDLES.forEach(function (c) {
    var x = c[0] + 0.5;
    add("line", "wick", { x1: x, x2: x, y1: c[1], y2: c[2] });
    add("rect", c[5] ? "body-f" : "body-h", {
      x: c[0] - 1.5, y: c[3] + 0.5, width: 4, height: Math.max(c[4] - c[3], 1)
    });
  });
  // keep the annotation stroke on top
  svg.appendChild(svg.querySelector(".ln-note"));
})();
```
